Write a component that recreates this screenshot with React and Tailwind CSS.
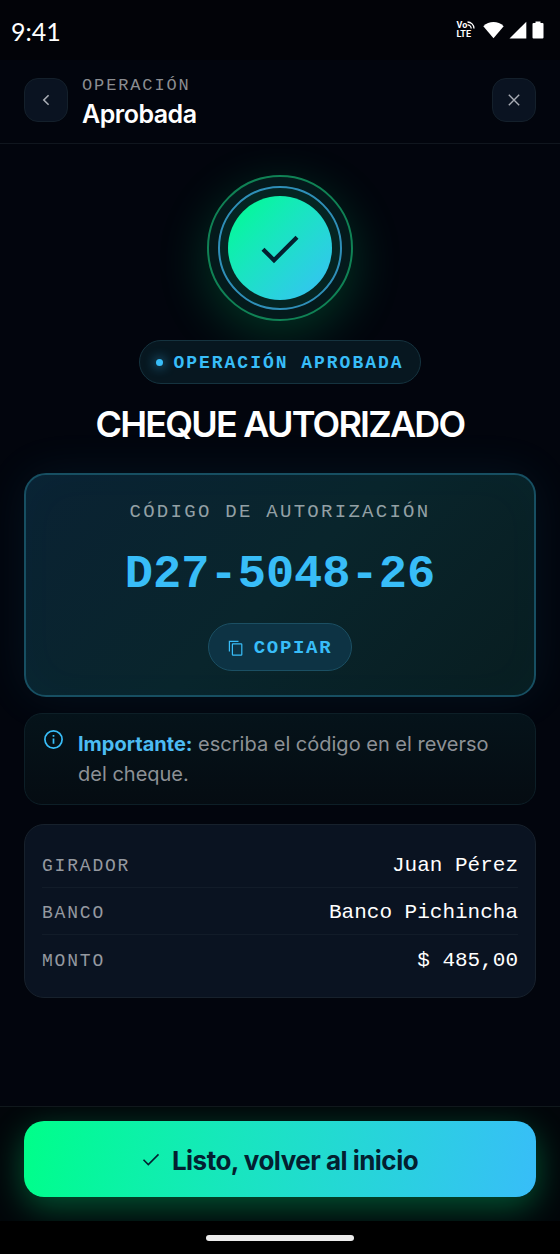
const mono = "font-['Liberation_Mono',monospace]";

const details = [
  { label: "GIRADOR", value: "Juan Pérez" },
  { label: "BANCO", value: "Banco Pichincha" },
  { label: "MONTO", value: "$ 485,00" },
];

function StatusBar() {
  return (
    <div className="flex h-[60px] items-center justify-between bg-[#020308] pl-[11px] pr-4">
      <span className="pt-[2px] font-['Lato',sans-serif] text-[25px] leading-8 text-white">9:41</span>
      <div className="flex items-center gap-[5px] text-white">
        <div className="relative mr-[3px] flex flex-col font-['Roboto',sans-serif] text-[9px] font-bold leading-[9px]">
          <span>Vo</span>
          <span className="pr-1">LTE</span>
          <svg className="absolute right-0 top-0" width="8" height="8" viewBox="0 0 8 8" fill="none" stroke="currentColor" strokeWidth="1.3" aria-hidden="true">
            <path d="M0.5 1A6.5 6.5 0 0 1 7 7.5M0.5 3.8A3.7 3.7 0 0 1 4.2 7.5" />
          </svg>
        </div>
        <svg width="21" height="18" viewBox="0 0 21 18" fill="currentColor" aria-hidden="true">
          <path d="M0.3 5.2C6 -0.3 15 -0.3 20.7 5.2L10.5 17.3Z" />
        </svg>
        <svg width="18" height="18" viewBox="0 0 18 18" fill="currentColor" aria-hidden="true">
          <path d="M17.3 0.8V17.5H0.5Z" />
        </svg>
        <svg width="12" height="18" viewBox="0 0 12 18" fill="currentColor" aria-hidden="true">
          <path d="M3.5 0.5H8.5V2H10.5Q11.5 2 11.5 3V16.5Q11.5 17.5 10.5 17.5H1.5Q0.5 17.5 0.5 16.5V3Q0.5 2 1.5 2H3.5Z" />
        </svg>
      </div>
    </div>
  );
}

function IconButton({ label, children }) {
  return (
    <button
      type="button"
      aria-label={label}
      className="flex size-11 shrink-0 items-center justify-center rounded-[14px] border border-[#14202b] bg-[#0a1321] text-[#a9adb5]"
    >
      {children}
    </button>
  );
}

function Header() {
  return (
    <header className="flex items-center gap-[14px] border-b border-[#10161e] px-6 pb-[15px] pt-3">
      <IconButton label="Volver">
        <svg width="16" height="16" viewBox="0 0 16 16" fill="none" stroke="currentColor" strokeWidth="1.6" aria-hidden="true">
          <path d="M10.6 3.2L5.8 8L10.6 12.8" />
        </svg>
      </IconButton>
      <div className="flex-1">
        <p className={`${mono} text-[17px] leading-7 tracking-[0.11em] text-[#8b8d91]`}>OPERACIÓN</p>
        <h1 className="text-[25px] font-semibold leading-7 tracking-[-0.02em] text-white">Aprobada</h1>
      </div>
      <IconButton label="Cerrar">
        <svg width="16" height="16" viewBox="0 0 16 16" fill="none" stroke="currentColor" strokeWidth="1.4" aria-hidden="true">
          <path d="M2.8 2.8L13.2 13.2M13.2 2.8L2.8 13.2" />
        </svg>
      </IconButton>
    </header>
  );
}

function SuccessMark() {
  return (
    <div className="flex size-[146px] items-center justify-center rounded-full border-2 border-[#108255] bg-[#041a1c] shadow-[0_14px_52px_rgba(0,255,136,0.2)]">
      <div className="flex size-[124px] items-center justify-center rounded-full border-2 border-[#2f8fb8] bg-[#052523]">
        <div className="size-[104px] rounded-full bg-linear-135 from-[#00ff88] to-[#38bdf8]">
          <svg viewBox="0 0 104 104" fill="none" stroke="#032030" strokeWidth="4.2" aria-hidden="true">
            <path d="M35 53.2L46 64.2L69 41.2" />
          </svg>
        </div>
      </div>
    </div>
  );
}

function CodeCard() {
  return (
    <section className="mt-7 flex w-full flex-col items-center rounded-[22px] border-2 border-[#174f62] bg-linear-135 from-[#0a2233] via-[#09252c] to-[#081d20] pb-6 pt-[25px] shadow-[0_0_48px_rgba(56,189,248,0.08),inset_0_0_48px_rgba(56,189,248,0.02)]">
      <h3 className={`${mono} text-[19px] leading-6 tracking-[0.12em] text-[#93a0a5]`}>CÓDIGO DE AUTORIZACIÓN</h3>
      <p className={`${mono} mt-[15px] text-[47px] font-bold leading-[72px] text-[#38bdf8]`}>D27-5048-26</p>
      <button
        type="button"
        className={`${mono} mt-3 flex h-12 items-center gap-[10px] rounded-full border border-[#1b4f63] bg-[#0d3344] px-[19px] pt-[2px] text-[19px] font-bold tracking-[0.09em] text-[#38bdf8]`}
      >
        <svg width="16" height="16" viewBox="0 0 16 16" fill="none" stroke="currentColor" strokeWidth="1.2" aria-hidden="true">
          <path d="M1.4 11.5V1.4H10.5" />
          <rect x="4.4" y="3.8" width="9.4" height="11.4" rx="0.7" />
        </svg>
        COPIAR
      </button>
    </section>
  );
}

function Notice() {
  return (
    <aside className="mt-4 flex w-full gap-[14px] rounded-[18px] border border-[#0d1f27] bg-linear-180 from-[#05131a] to-[#050c12] py-[15px] pl-[18px] pr-6">
      <svg className="shrink-0" width="21" height="21" viewBox="0 0 21 21" fill="none" stroke="#38bdf8" strokeWidth="1.7" aria-hidden="true">
        <circle cx="10.5" cy="10.5" r="8.6" />
        <path d="M10.5 9.4V14.8M10.5 6V7.8" />
      </svg>
      <p className="text-xl leading-[30px] text-[#8d9196]">
        <strong className="font-bold text-[#4cbcf3]">Importante:</strong> escriba el código en el reverso del cheque.
      </p>
    </aside>
  );
}

function Details() {
  return (
    <dl className="mt-[19px] w-full rounded-[20px] border border-[#17212c] bg-[#0a1321] px-[17px] pb-[15px] pt-4">
      {details.map((row) => (
        <div key={row.label} className="flex h-[47px] items-center justify-between border-b border-[#121c29] pt-1 last:border-b-0">
          <dt className={`${mono} text-lg leading-6 tracking-[0.1em] text-[#9599a0]`}>{row.label}</dt>
          <dd className={`${mono} text-[21px] leading-6 text-white`}>{row.value}</dd>
        </div>
      ))}
    </dl>
  );
}

export default function App() {
  return (
    <div className="flex min-h-screen flex-col bg-[#02050d] font-['Inter',sans-serif]">
      <StatusBar />
      <Header />
      <main className="flex flex-1 flex-col items-center px-6 pb-8 pt-[31px]">
        <SuccessMark />
        <div className={`${mono} mt-[19px] flex h-11 items-center gap-[10px] rounded-full border border-[#15333f] bg-[#071720] px-4 text-lg font-bold tracking-[0.11em] text-[#38bdf8]`}>
          <span className="size-[7px] rounded-full bg-[#38bdf8] shadow-[0_0_12px_#38bdf8]" />
          <span className="pt-[2px]">OPERACIÓN APROBADA</span>
        </div>
        <h2 className="mt-5 text-[36px] font-semibold leading-10 tracking-[-0.05em] text-white">CHEQUE AUTORIZADO</h2>
        <div className="h-px" />
        <CodeCard />
        <Notice />
        <Details />
      </main>
      <footer className="overflow-hidden border-t border-[#10181c] bg-[#02060a] px-6 pb-6 pt-[14px]">
        <button
          type="button"
          className="flex h-[76px] w-full items-center justify-center gap-3 rounded-[20px] bg-linear-100 from-[#00ff88] to-[#38bdf8] pt-[2px] text-[26px] font-bold tracking-[-0.02em] text-[#032030] shadow-[0_10px_34px_rgba(0,255,136,0.32)]"
        >
          <svg width="18" height="18" viewBox="0 0 18 18" fill="none" stroke="currentColor" strokeWidth="1.6" aria-hidden="true">
            <path d="M1.5 8.8L6.3 13.6L16.5 3.4" />
          </svg>
          Listo, volver al inicio
        </button>
      </footer>
      <div className="flex h-[33px] items-center justify-center bg-black">
        <div className="h-[6px] w-[148px] rounded-full bg-[#ececec]" />
      </div>
    </div>
  );
}
